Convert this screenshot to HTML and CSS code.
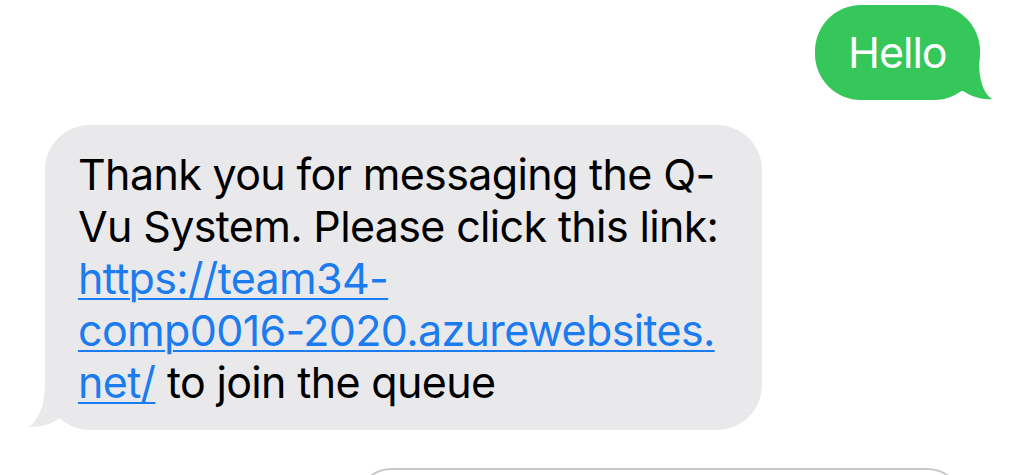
FILE: index.html
```html
<!DOCTYPE html>
<html lang="en">
<head>
<meta charset="utf-8">
<title>Messages</title>
<link rel="stylesheet" href="styles.css">
</head>
<body>
<main class="thread">
  <div class="row row-out">
    <div class="bubble bubble-out">
      Hello
      <svg class="tail tail-out" viewBox="0 0 40 46" width="40" height="46" aria-hidden="true">
        <path d="M0 0 L24 0 L24 5 C24 25 28 38 37 44 C28 45 17 42 8 36 L0 36 Z" fill="#35c759"/>
      </svg>
    </div>
  </div>
  <div class="row row-in">
    <div class="bubble bubble-in">
      Thank you for messaging the Q-<br>Vu System. Please click this link:<br><a class="link" href="#">https://team34-<br>comp0016-2020.azurewebsites.<br>net/</a> to join the queue
      <svg class="tail tail-in" viewBox="0 0 40 46" width="40" height="46" aria-hidden="true">
        <path d="M18 0 L40 0 L40 35 L33 35 C25 41 14 44 2 44 C12 36 18 22 18 0 Z" fill="#e9e9eb"/>
      </svg>
    </div>
  </div>
  <div class="row row-input">
    <div class="composer"></div>
  </div>
</main>
</body>
</html>
```
FILE: styles.css
```css
html, body {
  margin: 0;
  padding: 0;
  background: #ffffff;
  overflow: hidden;
  height: 475px;
}

.thread {
  display: flex;
  flex-direction: column;
  font-family: "Inter", "Liberation Sans", sans-serif;
  font-size: 43px;
  line-height: 52px;
  letter-spacing: -1px;
  color: #000000;
}

.row {
  display: flex;
}

.row-out {
  justify-content: flex-end;
  padding-top: 5px;
  padding-right: 44px;
}

.row-in {
  padding-top: 25px;
  padding-left: 45px;
}

.row-input {
  padding-top: 38px;
  padding-left: 355px;
}

.bubble {
  position: relative;
  border-radius: 46px;
  white-space: nowrap;
}

.bubble-out {
  background: #35c759;
  color: #ffffff;
  width: 101px;
  padding: 21px 31px 22px 33px;
}

.bubble-in {
  background: #e9e9eb;
  width: 651px;
  padding: 23px 33px 22px 33px;
  border-radius: 45px;
  letter-spacing: -0.65px;
}

.link {
  color: #1b7cf0;
  text-decoration: underline;
  text-decoration-thickness: 2px;
  text-underline-offset: 4px;
}

.tail {
  position: absolute;
  display: block;
}

.tail-out {
  right: -15px;
  bottom: -1px;
}

.tail-in {
  left: -18px;
  bottom: 1px;
}

.composer {
  width: 605px;
  height: 70px;
  border: 2px solid #c8c8c8;
  border-radius: 38px;
}
```
